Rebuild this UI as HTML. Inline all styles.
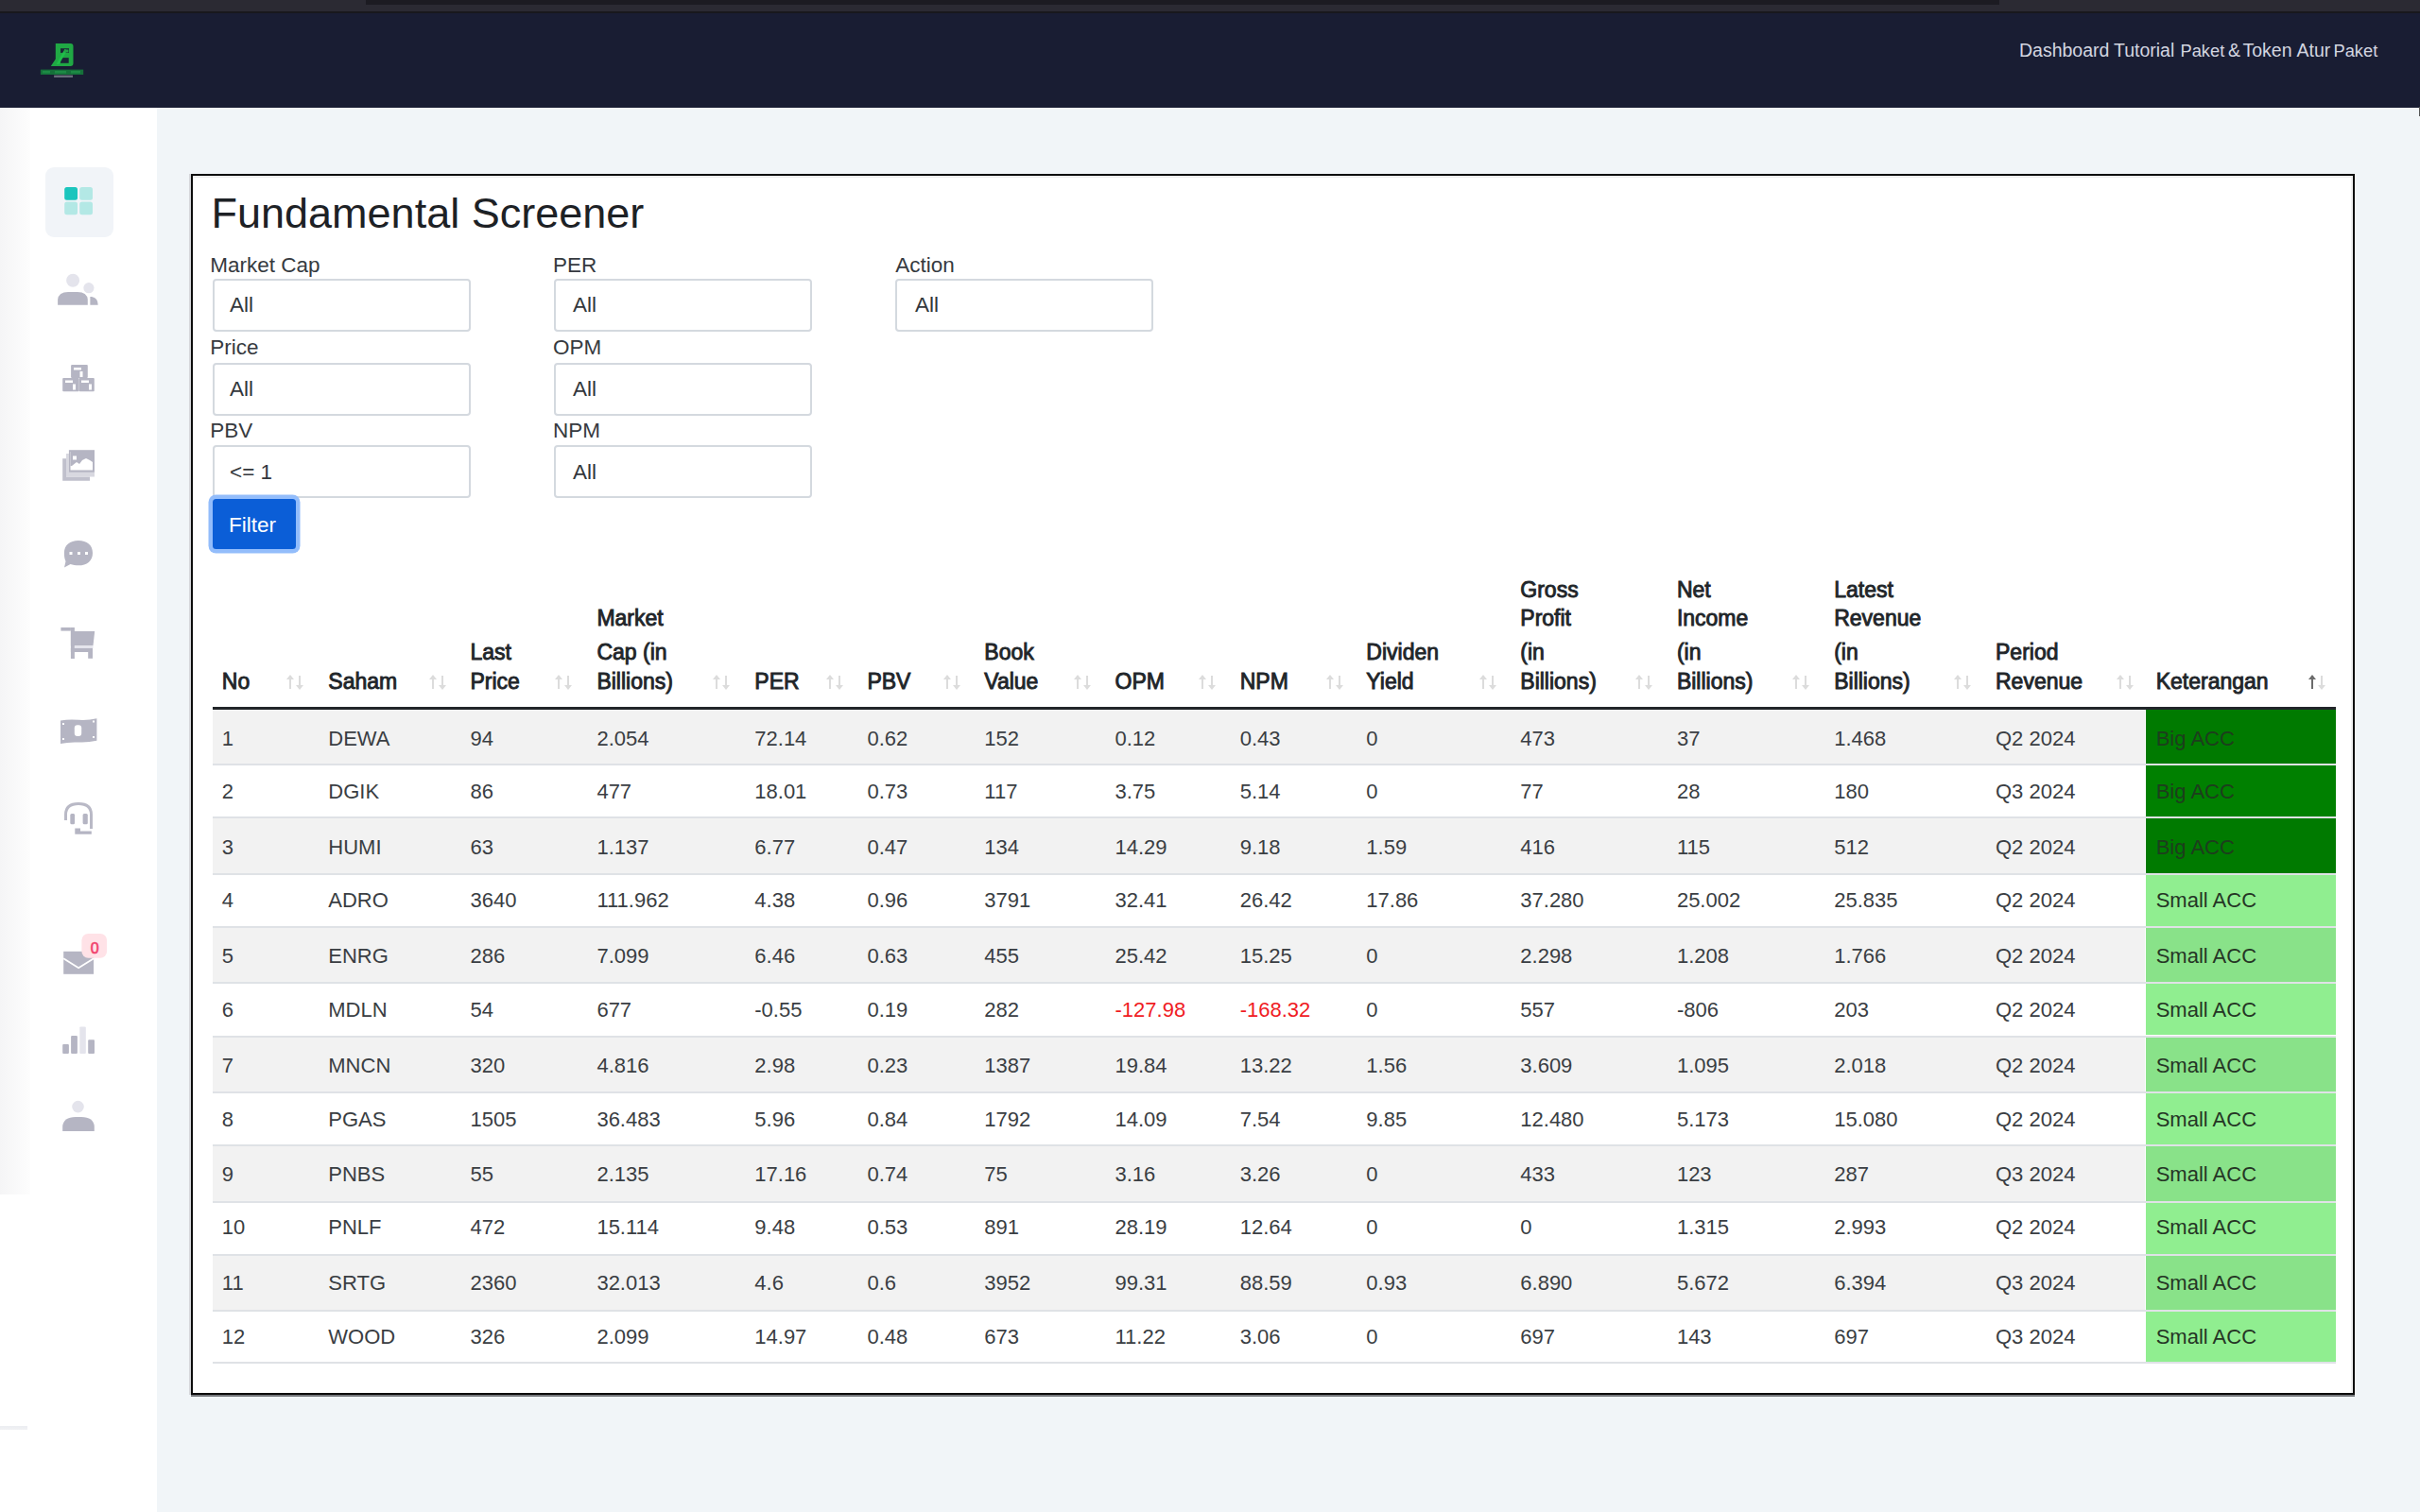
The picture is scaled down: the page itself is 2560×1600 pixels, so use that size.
<!DOCTYPE html>
<html><head><meta charset="utf-8">
<style>
*{box-sizing:border-box;margin:0;padding:0}
html,body{width:2560px;height:1600px;overflow:hidden;background:#f1f5f8;font-family:"Liberation Sans",sans-serif;color:#212529;position:relative}
.a{position:absolute}
.t{position:absolute;white-space:nowrap;line-height:normal}
#chrome{left:0;top:0;width:2560px;height:14px;background:#2b2a33}
#tab{left:387px;top:0;width:1728px;height:5px;background:#1c1b22}
#cline{left:0;top:12px;width:2560px;height:2px;background:#18181d}
#nav{left:0;top:14px;width:2560px;height:99.5px;background:#191d33}
.nl{font-size:19.5px;color:#d3d6e0}
#side{left:0;top:113.5px;width:166px;height:1486.5px;background:#fff}
#shade{left:0;top:113.5px;width:32px;height:1150px;background:linear-gradient(90deg,#f5f5f6,#fdfdfd)}
#sln{left:0;top:1509px;width:29px;height:4px;background:linear-gradient(#ebedf1,#f1f2f4)}
#card{left:202px;top:184px;width:2289px;height:1292px;background:#fff;border:2px solid #0c0c0c;box-shadow:inset 0 2px 0 #ededed,inset -2px 0 0 #f1f1f1}
.title{font-size:45px;color:#1d2125}
.lbl{font-size:22.5px;color:#363a40}
.inp{position:absolute;width:273px;height:56px;border:2px solid #d4d9df;border-radius:4px;background:#fff}
.val{font-size:22.5px;color:#33373c}
#btn{left:225px;top:528px;width:88px;height:53px;background:#0b5ed7;border-radius:3.5px;box-shadow:0 0 0 4.5px #93bdfb}
.btxt{font-size:22.5px;color:#fff}
.th{font-size:23px;font-weight:normal;-webkit-text-stroke:0.9px #212529;color:#212529}
.td{font-size:22px;color:#3a3e43}
.td.neg{color:#f01c24}
.td.big{color:#1d3d1d}
.td.sm{color:#253525}
.hb{position:absolute;height:3px;background:#212529}
.row{position:absolute;left:224.9px;width:2044.6px;background:#fff}
.row.o{background:#f2f2f2}
.gc{position:absolute;left:2269.5px;width:201.5px}
.rl{position:absolute;left:224.9px;width:2246.1px;height:2px;background:#dfe2e6}
.sort{position:absolute;width:19px;height:15px}
.sort i{position:absolute;top:0;width:2px;height:14px;background:#dcdcdc}
.sort i.up{left:3px}
.sort i.dn{left:13px}
.sort i:before{content:"";position:absolute;left:-3px;width:0;height:0;border-left:4px solid transparent;border-right:4px solid transparent}
.sort i.up:before{top:-1px;border-bottom:5px solid #dcdcdc}
.sort i.dn:before{bottom:-1px;border-top:5px solid #dcdcdc}
.sort.on i.up{background:#6c6c6c}
.sort.on i.up:before{border-bottom-color:#6c6c6c}
svg{position:absolute;overflow:visible}
</style></head><body>
<div id="chrome" class="a"></div><div id="tab" class="a"></div><div id="cline" class="a"></div>
<div id="nav" class="a"></div>
<!-- logo -->
<svg style="left:0;top:0" width="120" height="100" viewBox="0 0 120 100">
  <path d="M58.8 45.9 H74.5 Q77.5 45.9 77.5 49 V67 Q77.5 70 74.5 70 H53.8 L58.8 62.5 Z" fill="#20a844"/>
  <rect x="64" y="51.2" width="9" height="4.7" fill="#1a2636"/>
  <rect x="64" y="61.1" width="8.7" height="5.7" fill="#1a2636"/>
  <path d="M59.5 68 L68.5 52 L71 53.2 L62.5 68 Z" fill="#1fbf4a"/>
  <rect x="68" y="52.5" width="4.5" height="3" fill="#23a045"/>
  <rect x="42.9" y="73.6" width="45.3" height="5.4" fill="#15703a"/>
  <rect x="45" y="75" width="8" height="2.5" fill="#1d8a45"/>
  <rect x="58" y="75" width="12" height="2.5" fill="#1d8a45"/>
  <rect x="75" y="75" width="10" height="2.5" fill="#1d8a45"/>
  <rect x="57.1" y="79.6" width="19.9" height="2.4" fill="#666a78"/>
</svg>
<div class="t nl" style="left:2136px;top:42.1px">Dashboard</div>
<div class="t nl" style="left:2236px;top:42.1px">Tutorial</div>
<div class="t nl" style="left:2306.5px;top:42.6px;font-size:18.3px">Paket</div>
<div class="t nl" style="left:2357px;top:42.1px">&amp;</div>
<div class="t nl" style="left:2372.5px;top:42.1px">Token</div>
<div class="t nl" style="left:2429.5px;top:42.1px">Atur</div>
<div class="t nl" style="left:2468.5px;top:42.6px;font-size:18.3px">Paket</div>

<div id="side" class="a"></div><div class="a" style="left:2559px;top:113px;width:1px;height:10px;background:#555"></div><div id="shade" class="a"></div><div id="sln" class="a"></div>
<!-- sidebar icons -->
<div class="a" style="left:48px;top:177.4px;width:71.6px;height:73.4px;background:#f1f4f8;border-radius:9px"></div>
<svg style="left:0;top:0" width="166" height="1250" viewBox="0 0 166 1250">
  <!-- grid -->
  <rect x="68.2" y="197.9" width="13.8" height="13.9" rx="2.5" fill="#1bc5bd"/>
  <rect x="84.2" y="197.9" width="13.8" height="13.9" rx="2.5" fill="#b3e8e5"/>
  <rect x="68.2" y="213.6" width="13.8" height="13.6" rx="2.5" fill="#b3e8e5"/>
  <rect x="84.2" y="213.6" width="13.8" height="13.6" rx="2.5" fill="#b3e8e5"/>
  <!-- people -->
  <circle cx="77.1" cy="296.8" r="7" fill="#e4e4ec"/>
  <circle cx="93.9" cy="304.7" r="5.6" fill="#e4e4ec"/>
  <path d="M61.1 322.8 V317 Q62 309 72 309 H82 Q92 309 92.8 317 V322.8 Z" fill="#b5b5c3"/>
  <path d="M95.4 322.8 V314 H97 Q103.7 315 103.7 322.8 Z" fill="#b5b5c3"/>
  <!-- cubes -->
  <g fill="#b5b5c3">
    <rect x="75.1" y="386.1" width="17.7" height="13.8" rx="1"/>
    <rect x="66.2" y="399.9" width="17.4" height="14.4" rx="1"/>
    <rect x="83.6" y="399.9" width="16.2" height="14.4" rx="1"/>
  </g>
  <g fill="#fff">
    <rect x="78" y="389" width="8" height="2.5"/>
    <rect x="84.5" y="393" width="3" height="6"/>
    <rect x="69" y="402.5" width="8" height="2.5"/>
    <rect x="77" y="406.5" width="3" height="6"/>
    <rect x="86" y="402.5" width="8" height="2.5"/>
    <rect x="94" y="406.5" width="3" height="6"/>
  </g>
  <!-- images -->
  <path d="M66.2 485.2 H70 V504.5 H95 V508.8 H66.2 Z" fill="#c0c0cc"/><path d="M70 480 H72.9 V499.8 H100 V504.5 H70 Z" fill="#d8d8e0"/>
  <rect x="72.9" y="476.2" width="27.1" height="23.6" fill="#b5b5c3"/>
  <rect x="74.5" y="478" width="23.5" height="19.5" fill="#fff"/>
  <path d="M74.5 478 H98 V489 L95 487 L91 485 L87 487 L84 491 L81 489 L76 493 L74.5 493 Z" fill="#b5b5c3"/>
  <rect x="77" y="482.5" width="4" height="4" fill="#fff"/>
  <!-- chat -->
  <path d="M83 572.1 C92 572.1 98 577 98 585.2 C98 593.5 92 598.3 83 598.3 C80 598.3 77 597.8 74.5 597 L68 600.5 L69.5 594 C68.3 591.5 67.9 588.5 67.9 585.2 C67.9 577 74 572.1 83 572.1 Z" fill="#b5b5c3"/>
  <rect x="73.5" y="584" width="3" height="3" fill="#fff"/>
  <rect x="82" y="584" width="3" height="3" fill="#fff"/>
  <rect x="90" y="584" width="3" height="3" fill="#fff"/>
  <!-- cart -->
  <g fill="#b5b5c3">
    <rect x="64.4" y="664" width="10.5" height="3.6"/>
    <rect x="74.9" y="664" width="4" height="33"/>
    <path d="M74.9 668 H100.2 L98.5 683.2 H74.9 Z"/>
    <rect x="74.9" y="686" width="23" height="4"/>
    <rect x="93.2" y="686" width="4.8" height="10.8"/>
  </g>
  <rect x="78.9" y="683.2" width="19.5" height="2.8" fill="#e4e4ec"/>
  <!-- money -->
  <path d="M64 762.4 Q73 761 83 761.8 Q93 762.5 102.4 760.2 V783.8 Q93 786 83 785.5 Q73 785 64 786.9 Z" fill="#b5b5c3"/>
  <rect x="78.8" y="767.2" width="7.4" height="11.8" rx="3" fill="#fff"/>
  <rect x="66" y="765" width="2" height="2" fill="#fff"/>
  <rect x="98" y="762.5" width="2" height="2" fill="#fff"/>
  <rect x="66" y="781" width="2" height="2" fill="#fff"/>
  <rect x="98" y="779" width="2" height="2" fill="#fff"/>
  <!-- headset -->
  <path d="M69.5 868 V862 Q69.5 850.5 83 850.5 Q96.5 850.5 96.5 862 V877" fill="none" stroke="#b9b9c6" stroke-width="3"/>
  <rect x="74.3" y="861" width="4.8" height="11.3" rx="1.5" fill="#b5b5c3"/>
  <rect x="87.6" y="861" width="5.2" height="11.3" rx="1.5" fill="#b5b5c3"/>
  <path d="M79.3 876.5 H85 V879.5 H96.8 V882.8 H79.3 Z" fill="#b5b5c3"/>
  <!-- envelope -->
  <rect x="67.2" y="1006.8" width="31.9" height="24" fill="#b5b5c3"/>
  <path d="M67.2 1014.3 L83.1 1024.3 L99.1 1014.3" fill="none" stroke="#fff" stroke-width="1.8"/>
  <rect x="86.4" y="988" width="26.7" height="25.8" rx="7" fill="#ffe2e7"/>
  <!-- chart -->
  <rect x="66.2" y="1105" width="6.7" height="10" rx="1" fill="#b5b5c3"/>
  <rect x="75.1" y="1096" width="6.8" height="19" rx="1" fill="#b5b5c3"/>
  <rect x="84.3" y="1086.5" width="6.5" height="28.5" rx="1" fill="#e4e4ec"/>
  <rect x="93.2" y="1100.2" width="6.8" height="14.8" rx="1" fill="#b5b5c3"/>
  <!-- user -->
  <circle cx="82.5" cy="1171.1" r="6.3" fill="#e4e4ec"/>
  <path d="M66.2 1196.9 V1192 Q67 1182 80 1182 H86 Q99 1182 99.8 1192 V1196.9 Z" fill="#b5b5c3"/>
</svg>
<div class="t" style="left:95.8px;top:994.5px;font-size:16px;color:#f1416c;-webkit-text-stroke:0.6px #f1416c">0</div>

<div class="a" style="left:200px;top:184px;width:2px;height:1292px;background:#d6d7db"></div><div id="card" class="a"></div><div class="a" style="left:202px;top:1476px;width:2289px;height:1.5px;background:#75787c"></div>
<div class="t title" style="left:223.5px;top:199.6px">Fundamental Screener</div>

<div class="t lbl" style="left:222.2px;top:267.8px">Market Cap</div>
<div class="t lbl" style="left:585px;top:267.8px">PER</div>
<div class="t lbl" style="left:947.2px;top:267.8px">Action</div>
<div class="inp" style="left:224.9px;top:295.3px"></div>
<div class="inp" style="left:585.5px;top:295.3px"></div>
<div class="inp" style="left:947.4px;top:295.3px"></div>
<div class="t val" style="left:243px;top:310.2px">All</div>
<div class="t val" style="left:606px;top:310.2px">All</div>
<div class="t val" style="left:968px;top:310.2px">All</div>

<div class="t lbl" style="left:222.2px;top:355px">Price</div>
<div class="t lbl" style="left:585px;top:355px">OPM</div>
<div class="inp" style="left:224.9px;top:383.8px"></div>
<div class="inp" style="left:585.5px;top:383.8px"></div>
<div class="t val" style="left:243px;top:399.3px">All</div>
<div class="t val" style="left:606px;top:399.3px">All</div>

<div class="t lbl" style="left:222.2px;top:442.9px">PBV</div>
<div class="t lbl" style="left:585px;top:442.9px">NPM</div>
<div class="inp" style="left:224.9px;top:471.2px"></div>
<div class="inp" style="left:585.5px;top:471.2px"></div>
<div class="t val" style="left:243px;top:487.2px">&lt;= 1</div>
<div class="t val" style="left:606px;top:487.2px">All</div>

<div id="btn" class="a"></div>
<div class="t btxt" style="left:242px;top:542.9px">Filter</div>

<div class="t th" style="left:234.8px;top:708.1px">No</div>
<div class="sort" style="left:303.2px;top:715px"><i class="up"></i><i class="dn"></i></div>
<div class="t th" style="left:347.3px;top:708.1px">Saham</div>
<div class="sort" style="left:453.7px;top:715px"><i class="up"></i><i class="dn"></i></div>
<div class="t th" style="left:497.5px;top:676.6px">Last</div>
<div class="t th" style="left:497.5px;top:708.1px">Price</div>
<div class="sort" style="left:587.0px;top:715px"><i class="up"></i><i class="dn"></i></div>
<div class="t th" style="left:631.4px;top:641.2px">Market</div>
<div class="t th" style="left:631.4px;top:676.6px">Cap (in</div>
<div class="t th" style="left:631.4px;top:708.1px">Billions)</div>
<div class="sort" style="left:754.0px;top:715px"><i class="up"></i><i class="dn"></i></div>
<div class="t th" style="left:798.3px;top:708.1px">PER</div>
<div class="sort" style="left:874.0px;top:715px"><i class="up"></i><i class="dn"></i></div>
<div class="t th" style="left:917.4px;top:708.1px">PBV</div>
<div class="sort" style="left:997.5px;top:715px"><i class="up"></i><i class="dn"></i></div>
<div class="t th" style="left:1041.3px;top:676.6px">Book</div>
<div class="t th" style="left:1041.3px;top:708.1px">Value</div>
<div class="sort" style="left:1136.4px;top:715px"><i class="up"></i><i class="dn"></i></div>
<div class="t th" style="left:1179.5px;top:708.1px">OPM</div>
<div class="sort" style="left:1268.4px;top:715px"><i class="up"></i><i class="dn"></i></div>
<div class="t th" style="left:1311.7px;top:708.1px">NPM</div>
<div class="sort" style="left:1402.5px;top:715px"><i class="up"></i><i class="dn"></i></div>
<div class="t th" style="left:1445.3px;top:676.6px">Dividen</div>
<div class="t th" style="left:1445.3px;top:708.1px">Yield</div>
<div class="sort" style="left:1564.5px;top:715px"><i class="up"></i><i class="dn"></i></div>
<div class="t th" style="left:1608.3px;top:610.5px">Gross</div>
<div class="t th" style="left:1608.3px;top:641.2px">Profit</div>
<div class="t th" style="left:1608.3px;top:676.6px">(in</div>
<div class="t th" style="left:1608.3px;top:708.1px">Billions)</div>
<div class="sort" style="left:1729.8px;top:715px"><i class="up"></i><i class="dn"></i></div>
<div class="t th" style="left:1773.9px;top:610.5px">Net</div>
<div class="t th" style="left:1773.9px;top:641.2px">Income</div>
<div class="t th" style="left:1773.9px;top:676.6px">(in</div>
<div class="t th" style="left:1773.9px;top:708.1px">Billions)</div>
<div class="sort" style="left:1896.4px;top:715px"><i class="up"></i><i class="dn"></i></div>
<div class="t th" style="left:1940.2px;top:610.5px">Latest</div>
<div class="t th" style="left:1940.2px;top:641.2px">Revenue</div>
<div class="t th" style="left:1940.2px;top:676.6px">(in</div>
<div class="t th" style="left:1940.2px;top:708.1px">Billions)</div>
<div class="sort" style="left:2066.6px;top:715px"><i class="up"></i><i class="dn"></i></div>
<div class="t th" style="left:2111.0px;top:676.6px">Period</div>
<div class="t th" style="left:2111.0px;top:708.1px">Revenue</div>
<div class="sort" style="left:2238.5px;top:715px"><i class="up"></i><i class="dn"></i></div>
<div class="t th" style="left:2280.7px;top:708.1px">Keterangan</div>
<div class="sort on" style="left:2441.8px;top:715px"><i class="up"></i><i class="dn"></i></div>
<div class="hb" style="left:224.9px;top:748px;width:2246.1px"></div>
<div class="row o" style="top:751.0px;height:56.8px"></div>
<div class="gc" style="top:751.0px;height:56.8px;background:#007a00"></div>
<div class="rl" style="top:807.8px"></div>
<div class="t td" style="left:234.8px;top:769.0px">1</div>
<div class="t td" style="left:347.3px;top:769.0px">DEWA</div>
<div class="t td" style="left:497.5px;top:769.0px">94</div>
<div class="t td" style="left:631.4px;top:769.0px">2.054</div>
<div class="t td" style="left:798.3px;top:769.0px">72.14</div>
<div class="t td" style="left:917.4px;top:769.0px">0.62</div>
<div class="t td" style="left:1041.3px;top:769.0px">152</div>
<div class="t td" style="left:1179.5px;top:769.0px">0.12</div>
<div class="t td" style="left:1311.7px;top:769.0px">0.43</div>
<div class="t td" style="left:1445.3px;top:769.0px">0</div>
<div class="t td" style="left:1608.3px;top:769.0px">473</div>
<div class="t td" style="left:1773.9px;top:769.0px">37</div>
<div class="t td" style="left:1940.2px;top:769.0px">1.468</div>
<div class="t td" style="left:2111.0px;top:769.0px">Q2 2024</div>
<div class="t td big" style="left:2280.7px;top:769.0px">Big ACC</div>
<div class="row" style="top:809.8px;height:54.2px"></div>
<div class="gc" style="top:809.8px;height:54.2px;background:#008000"></div>
<div class="rl" style="top:864.0px"></div>
<div class="t td" style="left:234.8px;top:825.2px">2</div>
<div class="t td" style="left:347.3px;top:825.2px">DGIK</div>
<div class="t td" style="left:497.5px;top:825.2px">86</div>
<div class="t td" style="left:631.4px;top:825.2px">477</div>
<div class="t td" style="left:798.3px;top:825.2px">18.01</div>
<div class="t td" style="left:917.4px;top:825.2px">0.73</div>
<div class="t td" style="left:1041.3px;top:825.2px">117</div>
<div class="t td" style="left:1179.5px;top:825.2px">3.75</div>
<div class="t td" style="left:1311.7px;top:825.2px">5.14</div>
<div class="t td" style="left:1445.3px;top:825.2px">0</div>
<div class="t td" style="left:1608.3px;top:825.2px">77</div>
<div class="t td" style="left:1773.9px;top:825.2px">28</div>
<div class="t td" style="left:1940.2px;top:825.2px">180</div>
<div class="t td" style="left:2111.0px;top:825.2px">Q3 2024</div>
<div class="t td big" style="left:2280.7px;top:825.2px">Big ACC</div>
<div class="row o" style="top:866.0px;height:58.2px"></div>
<div class="gc" style="top:866.0px;height:58.2px;background:#007a00"></div>
<div class="rl" style="top:924.2px"></div>
<div class="t td" style="left:234.8px;top:883.7px">3</div>
<div class="t td" style="left:347.3px;top:883.7px">HUMI</div>
<div class="t td" style="left:497.5px;top:883.7px">63</div>
<div class="t td" style="left:631.4px;top:883.7px">1.137</div>
<div class="t td" style="left:798.3px;top:883.7px">6.77</div>
<div class="t td" style="left:917.4px;top:883.7px">0.47</div>
<div class="t td" style="left:1041.3px;top:883.7px">134</div>
<div class="t td" style="left:1179.5px;top:883.7px">14.29</div>
<div class="t td" style="left:1311.7px;top:883.7px">9.18</div>
<div class="t td" style="left:1445.3px;top:883.7px">1.59</div>
<div class="t td" style="left:1608.3px;top:883.7px">416</div>
<div class="t td" style="left:1773.9px;top:883.7px">115</div>
<div class="t td" style="left:1940.2px;top:883.7px">512</div>
<div class="t td" style="left:2111.0px;top:883.7px">Q2 2024</div>
<div class="t td big" style="left:2280.7px;top:883.7px">Big ACC</div>
<div class="row" style="top:926.2px;height:54.1px"></div>
<div class="gc" style="top:926.2px;height:54.1px;background:#90ee90"></div>
<div class="rl" style="top:980.3px"></div>
<div class="t td" style="left:234.8px;top:939.9px">4</div>
<div class="t td" style="left:347.3px;top:939.9px">ADRO</div>
<div class="t td" style="left:497.5px;top:939.9px">3640</div>
<div class="t td" style="left:631.4px;top:939.9px">111.962</div>
<div class="t td" style="left:798.3px;top:939.9px">4.38</div>
<div class="t td" style="left:917.4px;top:939.9px">0.96</div>
<div class="t td" style="left:1041.3px;top:939.9px">3791</div>
<div class="t td" style="left:1179.5px;top:939.9px">32.41</div>
<div class="t td" style="left:1311.7px;top:939.9px">26.42</div>
<div class="t td" style="left:1445.3px;top:939.9px">17.86</div>
<div class="t td" style="left:1608.3px;top:939.9px">37.280</div>
<div class="t td" style="left:1773.9px;top:939.9px">25.002</div>
<div class="t td" style="left:1940.2px;top:939.9px">25.835</div>
<div class="t td" style="left:2111.0px;top:939.9px">Q2 2024</div>
<div class="t td sm" style="left:2280.7px;top:939.9px">Small ACC</div>
<div class="row o" style="top:982.3px;height:56.9px"></div>
<div class="gc" style="top:982.3px;height:56.9px;background:#89e289"></div>
<div class="rl" style="top:1039.2px"></div>
<div class="t td" style="left:234.8px;top:998.8px">5</div>
<div class="t td" style="left:347.3px;top:998.8px">ENRG</div>
<div class="t td" style="left:497.5px;top:998.8px">286</div>
<div class="t td" style="left:631.4px;top:998.8px">7.099</div>
<div class="t td" style="left:798.3px;top:998.8px">6.46</div>
<div class="t td" style="left:917.4px;top:998.8px">0.63</div>
<div class="t td" style="left:1041.3px;top:998.8px">455</div>
<div class="t td" style="left:1179.5px;top:998.8px">25.42</div>
<div class="t td" style="left:1311.7px;top:998.8px">15.25</div>
<div class="t td" style="left:1445.3px;top:998.8px">0</div>
<div class="t td" style="left:1608.3px;top:998.8px">2.298</div>
<div class="t td" style="left:1773.9px;top:998.8px">1.208</div>
<div class="t td" style="left:1940.2px;top:998.8px">1.766</div>
<div class="t td" style="left:2111.0px;top:998.8px">Q2 2024</div>
<div class="t td sm" style="left:2280.7px;top:998.8px">Small ACC</div>
<div class="row" style="top:1041.2px;height:54.3px"></div>
<div class="gc" style="top:1041.2px;height:54.3px;background:#90ee90"></div>
<div class="rl" style="top:1095.5px"></div>
<div class="t td" style="left:234.8px;top:1055.8px">6</div>
<div class="t td" style="left:347.3px;top:1055.8px">MDLN</div>
<div class="t td" style="left:497.5px;top:1055.8px">54</div>
<div class="t td" style="left:631.4px;top:1055.8px">677</div>
<div class="t td" style="left:798.3px;top:1055.8px">-0.55</div>
<div class="t td" style="left:917.4px;top:1055.8px">0.19</div>
<div class="t td" style="left:1041.3px;top:1055.8px">282</div>
<div class="t td neg" style="left:1179.5px;top:1055.8px">-127.98</div>
<div class="t td neg" style="left:1311.7px;top:1055.8px">-168.32</div>
<div class="t td" style="left:1445.3px;top:1055.8px">0</div>
<div class="t td" style="left:1608.3px;top:1055.8px">557</div>
<div class="t td" style="left:1773.9px;top:1055.8px">-806</div>
<div class="t td" style="left:1940.2px;top:1055.8px">203</div>
<div class="t td" style="left:2111.0px;top:1055.8px">Q2 2024</div>
<div class="t td sm" style="left:2280.7px;top:1055.8px">Small ACC</div>
<div class="row o" style="top:1097.5px;height:57.5px"></div>
<div class="gc" style="top:1097.5px;height:57.5px;background:#89e289"></div>
<div class="rl" style="top:1155.0px"></div>
<div class="t td" style="left:234.8px;top:1115.3px">7</div>
<div class="t td" style="left:347.3px;top:1115.3px">MNCN</div>
<div class="t td" style="left:497.5px;top:1115.3px">320</div>
<div class="t td" style="left:631.4px;top:1115.3px">4.816</div>
<div class="t td" style="left:798.3px;top:1115.3px">2.98</div>
<div class="t td" style="left:917.4px;top:1115.3px">0.23</div>
<div class="t td" style="left:1041.3px;top:1115.3px">1387</div>
<div class="t td" style="left:1179.5px;top:1115.3px">19.84</div>
<div class="t td" style="left:1311.7px;top:1115.3px">13.22</div>
<div class="t td" style="left:1445.3px;top:1115.3px">1.56</div>
<div class="t td" style="left:1608.3px;top:1115.3px">3.609</div>
<div class="t td" style="left:1773.9px;top:1115.3px">1.095</div>
<div class="t td" style="left:1940.2px;top:1115.3px">2.018</div>
<div class="t td" style="left:2111.0px;top:1115.3px">Q2 2024</div>
<div class="t td sm" style="left:2280.7px;top:1115.3px">Small ACC</div>
<div class="row" style="top:1157.0px;height:54.2px"></div>
<div class="gc" style="top:1157.0px;height:54.2px;background:#90ee90"></div>
<div class="rl" style="top:1211.2px"></div>
<div class="t td" style="left:234.8px;top:1171.5px">8</div>
<div class="t td" style="left:347.3px;top:1171.5px">PGAS</div>
<div class="t td" style="left:497.5px;top:1171.5px">1505</div>
<div class="t td" style="left:631.4px;top:1171.5px">36.483</div>
<div class="t td" style="left:798.3px;top:1171.5px">5.96</div>
<div class="t td" style="left:917.4px;top:1171.5px">0.84</div>
<div class="t td" style="left:1041.3px;top:1171.5px">1792</div>
<div class="t td" style="left:1179.5px;top:1171.5px">14.09</div>
<div class="t td" style="left:1311.7px;top:1171.5px">7.54</div>
<div class="t td" style="left:1445.3px;top:1171.5px">9.85</div>
<div class="t td" style="left:1608.3px;top:1171.5px">12.480</div>
<div class="t td" style="left:1773.9px;top:1171.5px">5.173</div>
<div class="t td" style="left:1940.2px;top:1171.5px">15.080</div>
<div class="t td" style="left:2111.0px;top:1171.5px">Q2 2024</div>
<div class="t td sm" style="left:2280.7px;top:1171.5px">Small ACC</div>
<div class="row o" style="top:1213.2px;height:57.5px"></div>
<div class="gc" style="top:1213.2px;height:57.5px;background:#89e289"></div>
<div class="rl" style="top:1270.7px"></div>
<div class="t td" style="left:234.8px;top:1230.0px">9</div>
<div class="t td" style="left:347.3px;top:1230.0px">PNBS</div>
<div class="t td" style="left:497.5px;top:1230.0px">55</div>
<div class="t td" style="left:631.4px;top:1230.0px">2.135</div>
<div class="t td" style="left:798.3px;top:1230.0px">17.16</div>
<div class="t td" style="left:917.4px;top:1230.0px">0.74</div>
<div class="t td" style="left:1041.3px;top:1230.0px">75</div>
<div class="t td" style="left:1179.5px;top:1230.0px">3.16</div>
<div class="t td" style="left:1311.7px;top:1230.0px">3.26</div>
<div class="t td" style="left:1445.3px;top:1230.0px">0</div>
<div class="t td" style="left:1608.3px;top:1230.0px">433</div>
<div class="t td" style="left:1773.9px;top:1230.0px">123</div>
<div class="t td" style="left:1940.2px;top:1230.0px">287</div>
<div class="t td" style="left:2111.0px;top:1230.0px">Q3 2024</div>
<div class="t td sm" style="left:2280.7px;top:1230.0px">Small ACC</div>
<div class="row" style="top:1272.7px;height:54.3px"></div>
<div class="gc" style="top:1272.7px;height:54.3px;background:#90ee90"></div>
<div class="rl" style="top:1327.0px"></div>
<div class="t td" style="left:234.8px;top:1285.7px">10</div>
<div class="t td" style="left:347.3px;top:1285.7px">PNLF</div>
<div class="t td" style="left:497.5px;top:1285.7px">472</div>
<div class="t td" style="left:631.4px;top:1285.7px">15.114</div>
<div class="t td" style="left:798.3px;top:1285.7px">9.48</div>
<div class="t td" style="left:917.4px;top:1285.7px">0.53</div>
<div class="t td" style="left:1041.3px;top:1285.7px">891</div>
<div class="t td" style="left:1179.5px;top:1285.7px">28.19</div>
<div class="t td" style="left:1311.7px;top:1285.7px">12.64</div>
<div class="t td" style="left:1445.3px;top:1285.7px">0</div>
<div class="t td" style="left:1608.3px;top:1285.7px">0</div>
<div class="t td" style="left:1773.9px;top:1285.7px">1.315</div>
<div class="t td" style="left:1940.2px;top:1285.7px">2.993</div>
<div class="t td" style="left:2111.0px;top:1285.7px">Q2 2024</div>
<div class="t td sm" style="left:2280.7px;top:1285.7px">Small ACC</div>
<div class="row o" style="top:1329.0px;height:56.6px"></div>
<div class="gc" style="top:1329.0px;height:56.6px;background:#89e289"></div>
<div class="rl" style="top:1385.6px"></div>
<div class="t td" style="left:234.8px;top:1345.2px">11</div>
<div class="t td" style="left:347.3px;top:1345.2px">SRTG</div>
<div class="t td" style="left:497.5px;top:1345.2px">2360</div>
<div class="t td" style="left:631.4px;top:1345.2px">32.013</div>
<div class="t td" style="left:798.3px;top:1345.2px">4.6</div>
<div class="t td" style="left:917.4px;top:1345.2px">0.6</div>
<div class="t td" style="left:1041.3px;top:1345.2px">3952</div>
<div class="t td" style="left:1179.5px;top:1345.2px">99.31</div>
<div class="t td" style="left:1311.7px;top:1345.2px">88.59</div>
<div class="t td" style="left:1445.3px;top:1345.2px">0.93</div>
<div class="t td" style="left:1608.3px;top:1345.2px">6.890</div>
<div class="t td" style="left:1773.9px;top:1345.2px">5.672</div>
<div class="t td" style="left:1940.2px;top:1345.2px">6.394</div>
<div class="t td" style="left:2111.0px;top:1345.2px">Q3 2024</div>
<div class="t td sm" style="left:2280.7px;top:1345.2px">Small ACC</div>
<div class="row" style="top:1387.6px;height:53.6px"></div>
<div class="gc" style="top:1387.6px;height:53.6px;background:#90ee90"></div>
<div class="rl" style="top:1441.2px"></div>
<div class="t td" style="left:234.8px;top:1402.1px">12</div>
<div class="t td" style="left:347.3px;top:1402.1px">WOOD</div>
<div class="t td" style="left:497.5px;top:1402.1px">326</div>
<div class="t td" style="left:631.4px;top:1402.1px">2.099</div>
<div class="t td" style="left:798.3px;top:1402.1px">14.97</div>
<div class="t td" style="left:917.4px;top:1402.1px">0.48</div>
<div class="t td" style="left:1041.3px;top:1402.1px">673</div>
<div class="t td" style="left:1179.5px;top:1402.1px">11.22</div>
<div class="t td" style="left:1311.7px;top:1402.1px">3.06</div>
<div class="t td" style="left:1445.3px;top:1402.1px">0</div>
<div class="t td" style="left:1608.3px;top:1402.1px">697</div>
<div class="t td" style="left:1773.9px;top:1402.1px">143</div>
<div class="t td" style="left:1940.2px;top:1402.1px">697</div>
<div class="t td" style="left:2111.0px;top:1402.1px">Q3 2024</div>
<div class="t td sm" style="left:2280.7px;top:1402.1px">Small ACC</div>
</body></html>
